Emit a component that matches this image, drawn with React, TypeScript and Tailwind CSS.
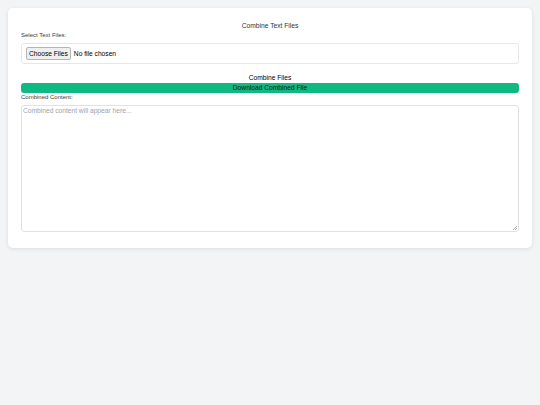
import React from "react";

export default function App() {
  return (
    <div
      className="min-h-screen bg-[#f3f4f6] p-2"
      style={{ fontFamily: '"Liberation Sans", Arial, sans-serif' }}
    >
      <div className="bg-white rounded-[5px] shadow-[0_1px_4px_rgba(0,0,0,0.10)] px-[13px] pt-[13px] pb-[16px]">
        <h1 className="text-center text-[6.7px] leading-[10px] text-[#333]">
          Combine Text Files
        </h1>
        <label className="block text-[6px] leading-[8px] text-[#3a3a3a]">
          Select Text Files:
        </label>
        <div className="mt-[4px] border border-[#e5e7eb] rounded-[3px] px-[4px] py-[3px] flex items-center h-[21px]">
          <input
            type="file"
            multiple
            className="block text-[6.67px] leading-[11px] text-black file:h-[13px] file:px-[2px] file:mr-[3px] file:bg-[#efefef] file:border file:border-[#b5b5b5] file:rounded-[2px] file:text-black"
          />
        </div>
        <button className="mt-[9px] block w-full text-center text-[6.67px] leading-[10px] text-black">
          Combine Files
        </button>
        <button className="block w-full h-[10px] bg-[#10b981] rounded-[3px] text-center text-[6.67px] leading-[10px] text-[#111]">
          Download Combined File
        </button>
        <label className="block text-[6px] leading-[8px] text-[#3a3a3a]">
          Combined Content:
        </label>
        <div className="relative mt-[4px]">
          <textarea
            className="block w-full h-[127px] resize-none border border-[#e2e2e2] rounded-[3px] px-[1px] py-[1px] text-[6.67px] leading-[8px] placeholder:text-[#9ca3af] outline-none"
            placeholder="Combined content will appear here..."
          />
          <svg
            className="absolute right-[2px] bottom-[2px]"
            width="4"
            height="4"
            viewBox="0 0 4 4"
          >
            <line x1="4" y1="0" x2="0" y2="4" stroke="#9a9a9a" strokeWidth="0.8" />
            <line x1="4" y1="2" x2="2" y2="4" stroke="#9a9a9a" strokeWidth="0.8" />
          </svg>
        </div>
      </div>
    </div>
  );
}
